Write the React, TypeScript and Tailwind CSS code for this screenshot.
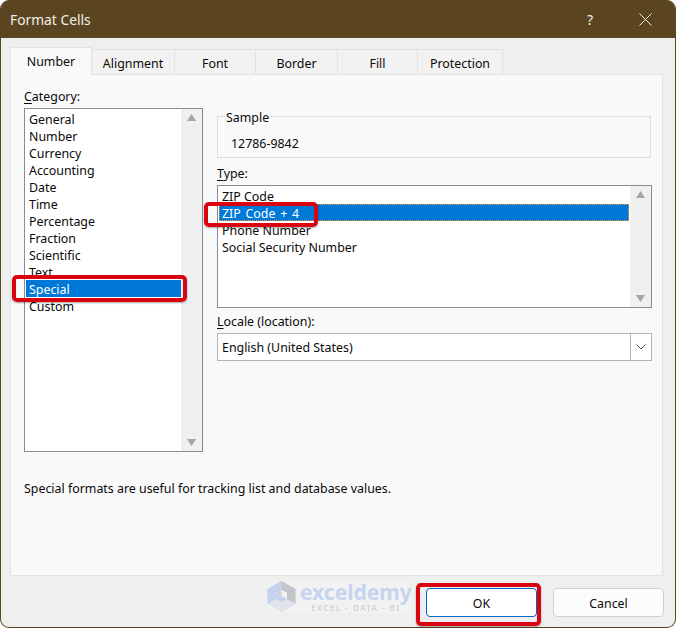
const tabs = [
  { label: "Number", width: "w-[82px]", active: true },
  { label: "Alignment", width: "w-[83px]" },
  { label: "Font", width: "w-[81px]" },
  { label: "Border", width: "w-[82px]" },
  { label: "Fill", width: "w-[80px]" },
  { label: "Protection", width: "w-[85px]" },
];

const categories = [
  "General",
  "Number",
  "Currency",
  "Accounting",
  "Date",
  "Time",
  "Percentage",
  "Fraction",
  "Scientific",
  "Text",
  "Special",
  "Custom",
];

const types = ["ZIP Code", "ZIP Code + 4", "Phone Number", "Social Security Number"];

function ScrollStrip({ className }: { className: string }) {
  return (
    <div className={`flex shrink-0 flex-col items-center justify-between bg-[#f0f0f0] py-[5px] ${className}`}>
      <svg width="11" height="7" viewBox="0 0 11 7">
        <path d="M5.5 0 L10 7 H1 Z" fill="#a6a6a6" />
      </svg>
      <svg width="11" height="7" viewBox="0 0 11 7">
        <path d="M1 0 H10 L5.5 7 Z" fill="#a6a6a6" />
      </svg>
    </div>
  );
}

function RedBox({ className }: { className: string }) {
  return (
    <div
      className={`pointer-events-none absolute rounded-[5px] border-[4px] border-[#d90410] shadow-[0_1px_2px_rgba(0,0,0,0.35)] ${className}`}
    />
  );
}

export default function App() {
  return (
    <div className="relative h-[628px] w-[676px] overflow-hidden bg-white font-['Noto_Sans',sans-serif] text-[12.4px] leading-[17px] text-[#0a0a0a]">
      <div className="flex h-full flex-col overflow-hidden rounded-[9px] border border-t-0 border-[#5a4520] bg-[#efefef]">
        {/* title bar */}
        <div className="flex h-[38px] shrink-0 items-center justify-between bg-[#5a4520] pl-[9px] pr-[23px] text-[13.8px] text-[#f3f0ea]">
          <span>Format Cells</span>
          <div className="flex items-center gap-[46px]">
            <span className="text-[14px]">?</span>
            <svg width="13" height="13" viewBox="0 0 13 13" fill="none" stroke="#f3f0ea" strokeWidth="1">
              <path d="M0.5 0.5 L12.5 12.5 M12.5 0.5 L0.5 12.5" />
            </svg>
          </div>
        </div>

        {/* tabs */}
        <div className="mt-[9px] flex h-[27px] shrink-0 items-end pl-[9px]">
          {tabs.map((tab) =>
            tab.active ? (
              <div
                key={tab.label}
                className={`z-10 -mb-px flex h-[28px] items-center justify-center border border-b-0 border-[#e2e2e2] bg-[#f9f9f9] pb-[1px] ${tab.width}`}
              >
                {tab.label}
              </div>
            ) : (
              <div
                key={tab.label}
                className={`flex h-[25px] items-center justify-center border border-b-0 border-l-0 border-[#e2e2e2] bg-[#f2f2f2] pt-[2px] ${tab.width}`}
              >
                {tab.label}
              </div>
            ),
          )}
        </div>

        {/* panel */}
        <div className="ml-[9px] mr-[12px] flex h-[502px] shrink-0 flex-col border border-[#e2e2e2] bg-[#f9f9f9] pl-[13px] pr-[11px]">
          <div className="flex gap-[14px]">
            {/* category column */}
            <div className="w-[179px] shrink-0">
              <div className="mt-[13px] h-[20px]">
                <span className="underline underline-offset-2">C</span>ategory:
              </div>
              <div className="flex h-[344px] border border-[#8b8b98] bg-white">
                <div className="min-w-0 flex-1 pl-[1px] pt-[1px]">
                  {categories.map((c) =>
                    c === "Special" ? (
                      <div
                        key={c}
                        className="h-[17px] bg-[#0078d7] pl-[3px] leading-[19px] text-white outline outline-1 outline-white"
                      >
                        {c}
                      </div>
                    ) : (
                      <div key={c} className="h-[17px] pl-[3px] leading-[19px]">
                        {c}
                      </div>
                    ),
                  )}
                </div>
                <ScrollStrip className="w-[21px]" />
              </div>
            </div>

            {/* right column */}
            <div className="w-[435px] shrink-0">
              {/* sample */}
              <div className="relative mt-[41px] h-[42px] w-[434px] border border-[#dcdcdc] pl-[13px] pt-[18px]">
                <span className="absolute -top-[8px] left-[7px] bg-[#f9f9f9] px-px">Sample</span>
                12786-9842
              </div>
              <div className="mt-[7px] h-[20px]">
                <span className="underline underline-offset-2">T</span>ype:
              </div>
              <div className="flex h-[123px] border border-[#8b8b98] bg-white">
                <div className="min-w-0 flex-1 pl-[1px] pt-[1px]">
                  {types.map((t) =>
                    t === "ZIP Code + 4" ? (
                      <div
                        key={t}
                        className="mr-px h-[17px] bg-[#0078d7] pl-[3px] leading-[19px] [word-spacing:1.5px] text-white outline-1 -outline-offset-1 outline-dotted outline-[#f59a23]"
                      >
                        {t}
                      </div>
                    ) : (
                      <div key={t} className="h-[17px] pl-[3px] leading-[19px]">
                        {t}
                      </div>
                    ),
                  )}
                </div>
                <ScrollStrip className="w-[21px]" />
              </div>
              <div className="mt-[5px] h-[20px]">
                <span className="underline underline-offset-2">L</span>ocale (location):
              </div>
              <div className="flex h-[28px] items-center border border-[#b4b4b4] bg-white pl-[4px]">
                <span className="flex-1">English (United States)</span>
                <div className="flex h-full w-[21px] items-center justify-center border-l border-[#b4b4b4]">
                  <svg width="10" height="6" viewBox="0 0 10 6" fill="none" stroke="#555" strokeWidth="1">
                    <path d="M0.5 0.5 L5 5 L9.5 0.5" />
                  </svg>
                </div>
              </div>
            </div>
          </div>
          <p className="mt-[28px]">Special formats are useful for tracking list and database values.</p>
        </div>

        {/* buttons */}
        <div className="mr-[11px] mt-[12px] flex justify-end gap-[16px]">
          <button className="h-[29px] w-[111px] rounded-[4px] border border-[#0067c0] bg-white pt-px">OK</button>
          <button className="h-[29px] w-[111px] rounded-[4px] border border-[#d0d0d0] bg-[#fcfcfc] pt-px">Cancel</button>
        </div>
      </div>

      {/* watermark */}
      <div className="absolute left-[267px] top-[581px] flex h-[32px] w-[142px] items-center gap-[4px] bg-[#f2f2f2]">
        <svg width="29" height="32" viewBox="0 0 29 32" className="shrink-0">
          <path d="M14.5 0 L28.5 8 V23 L14.5 31.5 L0.5 23 V8 Z" fill="#dfe4ea" />
          <path d="M14.5 0 L0.5 8 V23 L9 18 V12 L14.5 9 Z" fill="#c3d3ef" />
          <path d="M14.5 0 L28.5 8 V23 L20 18 V12 L14.5 9 Z" fill="#c2c5ca" />
          <path d="M14.5 9 L20 12 V18 L14.5 21 L9 18 V12 Z" fill="#f0f1f2" />
          <path d="M9 18 L14.5 15 L20 18 L14.5 21 Z" fill="#c3d3ef" />
          <path d="M14.5 9 V15 L9 18 V12 Z" fill="#cfd3d9" />
        </svg>
        <div className="flex flex-col items-center">
          <span className="text-[21px] font-bold leading-[21px] text-[#c5d4ef]">exceldemy</span>
          <span className="text-[8px] font-semibold leading-[10px] tracking-[0.18em] text-[#cfd2d6]">EXCEL - DATA - BI</span>
        </div>
      </div>

      {/* red highlights */}
      <RedBox className="left-[12px] top-[275px] h-[27px] w-[175px]" />
      <RedBox className="left-[204px] top-[202px] h-[25px] w-[114px]" />
      <RedBox className="left-[416px] top-[583px] h-[43px] w-[125px]" />
    </div>
  );
}
